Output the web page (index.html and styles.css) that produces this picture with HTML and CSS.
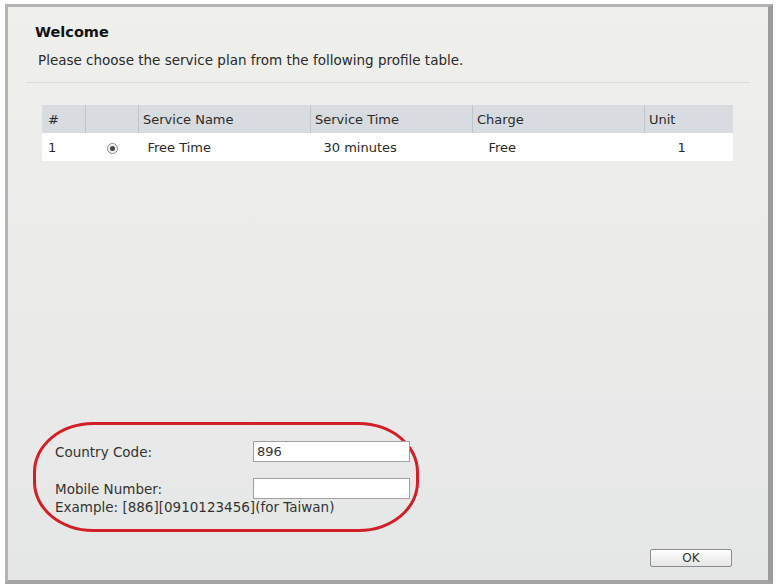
FILE: index.html
```html
<!DOCTYPE html>
<html>
<head>
    <title>Welcome</title>
    <meta name="viewport" content="width=device-width, initial-scale=1.0">
    <link rel="stylesheet" href="styles.css">
</head>
<body>
    <div class="frame">
        <div class="head">
            <h1>Welcome</h1>
            <p>Please choose the service plan from the following profile table.</p>
        </div>

        <table class="plans">
            <thead>
                <tr>
                    <th class="c-num">#</th>
                    <th class="c-sel"></th>
                    <th class="c-name">Service Name</th>
                    <th class="c-time">Service Time</th>
                    <th class="c-charge">Charge</th>
                    <th class="c-unit">Unit</th>
                </tr>
            </thead>
            <tbody>
                <tr>
                    <td class="c-num">1</td>
                    <td class="c-sel"><span class="radio checked"></span></td>
                    <td class="c-name">Free Time</td>
                    <td class="c-time">30 minutes</td>
                    <td class="c-charge">Free</td>
                    <td class="c-unit">1</td>
                </tr>
            </tbody>
        </table>

        <div class="spacer"></div>

        <div class="contact">
            <div class="field">
                <label>Country Code:</label>
                <input type="text" value="896">
            </div>
            <div class="field">
                <label>Mobile Number:</label>
                <input type="text" value="">
            </div>
            <div class="hint">Example: [886][0910123456](for Taiwan)</div>
        </div>

        <div class="actions">
            <button>OK</button>
        </div>
    </div>
</body>
</html>
```

FILE: styles.css
```css
html, body {
    margin: 0;
    padding: 0;
    background: #ffffff;
    font-family: "DejaVu Sans", Verdana, sans-serif;
    font-size: 13px;
    color: #2a2a2a;
}

.frame {
    box-sizing: border-box;
    display: flex;
    flex-direction: column;
    height: 580px;
    margin: 4px 3px 0 5px;
    border: 3px solid #b4b4b4;
    border-right: 5px solid #9c9c9c;
    border-bottom: 4px solid #a4a4a4;
    background: linear-gradient(#efefec, #ebebe9 50%, #e5e7e7);
}

.head {
    margin: 0 18px;
    padding: 17px 8px 14px;
    border-bottom: 1px solid #dddddb;
}

.head h1 {
    margin: 0 0 11px 1px;
    font-size: 14.5px;
    line-height: 17px;
    font-weight: bold;
    color: #111;
}

.head p {
    margin: 0 0 0 4px;
    font-size: 13.5px;
    line-height: 16px;
}

table.plans {
    margin: 22px 35px 0 34px;
    border-collapse: collapse;
    width: 691px;
}

table.plans th {
    height: 28px;
    padding: 0 0 0 4px;
    text-align: left;
    font-weight: normal;
    background: #d8dce1;
    border-left: 1px solid #c2c6cb;
}

table.plans th:first-child {
    border-left: none;
    padding-left: 6px;
}

table.plans td {
    height: 28px;
    padding: 0;
    background: #ffffff;
}

.c-num { width: 37px; }
.c-sel { width: 48px; }
.c-name { width: 163px; }
.c-time { width: 149px; }
.c-charge { width: 156px; }

td.c-num { padding-left: 6px !important; }
td.c-sel { text-align: center; }
td.c-name { padding-left: 9px !important; }
td.c-time { padding-left: 13px !important; }
td.c-charge { padding-left: 16px !important; }
td.c-unit { padding-left: 33px !important; }

.radio {
    display: inline-block;
    box-sizing: border-box;
    width: 11px;
    height: 11px;
    border: 1px solid #8a8a8a;
    border-radius: 50%;
    background: #f4f4f4;
    vertical-align: middle;
    position: relative;
}

.radio.checked::after {
    content: "";
    position: absolute;
    left: 2px;
    top: 2px;
    width: 5px;
    height: 5px;
    border-radius: 50%;
    background: #444;
}

.spacer {
    flex: 1;
}

.contact {
    box-sizing: border-box;
    width: 386px;
    height: 110px;
    margin-left: 25px;
    padding: 16px 0 0 19px;
    border: 3px solid #d21f27;
    border-radius: 60px / 50px;
    font-size: 13.5px;
}

.field {
    display: flex;
    align-items: center;
    height: 21px;
}

.field + .field {
    margin-top: 16px;
}

.field label {
    width: 198px;
    color: #333;
}

.field input {
    box-sizing: border-box;
    width: 157px;
    height: 21px;
    margin: 0;
    padding: 0 3px;
    border: 1px solid #a0a0a0;
    background: #ffffff;
    font: inherit;
    font-size: 13px;
    color: #333;
}

.hint {
    color: #333;
    line-height: 16px;
}

.actions {
    display: flex;
    justify-content: flex-end;
    padding: 17px 36px 13px 0;
}

button {
    width: 82px;
    height: 18px;
    padding: 0;
    border: 1px solid #8c8c8c;
    border-radius: 2px;
    background: linear-gradient(#ffffff, #e4e4e4);
    font: inherit;
    font-size: 12px;
    color: #333;
}
```
